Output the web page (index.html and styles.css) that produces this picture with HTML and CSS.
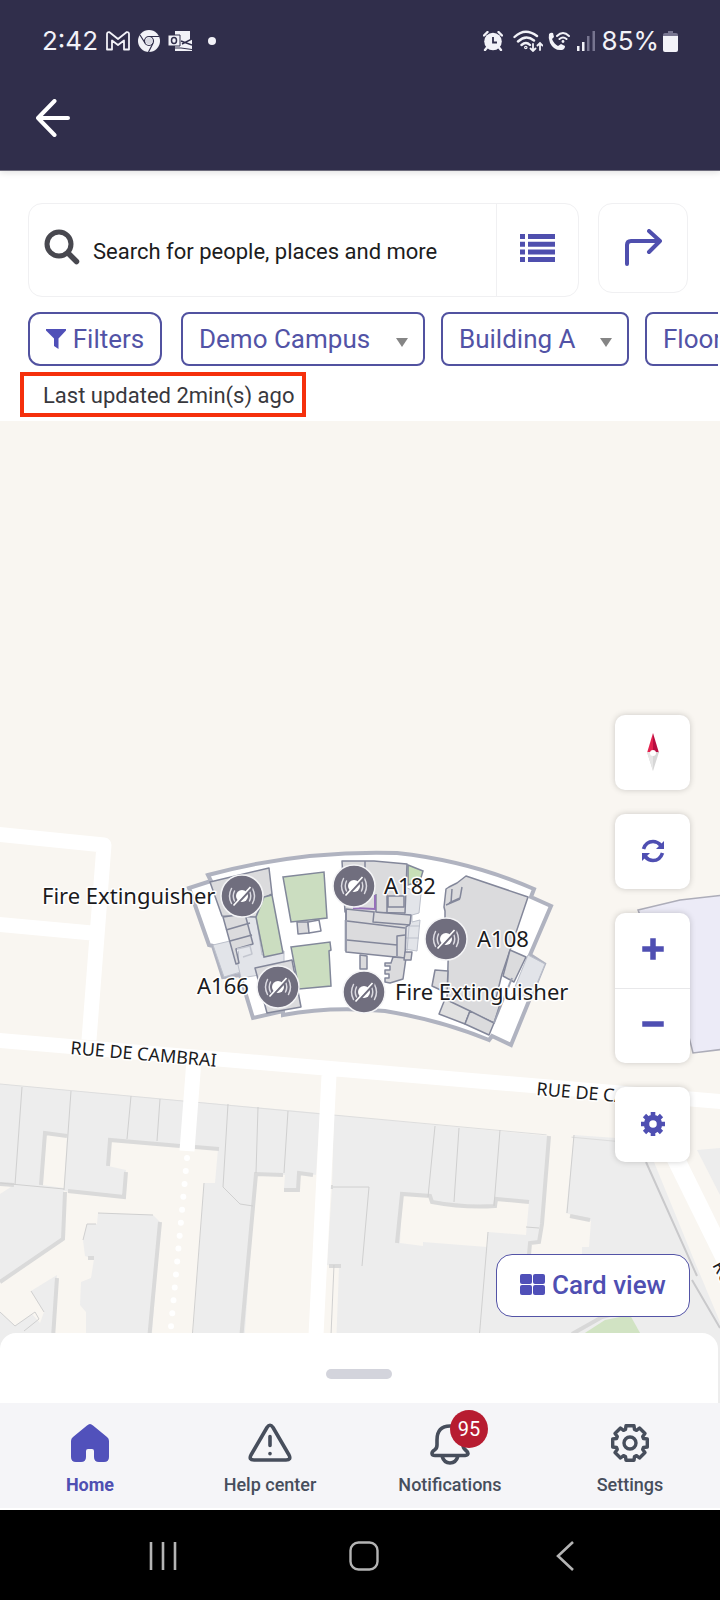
FILE: index.html
```html
<!DOCTYPE html>
<html lang="en">
<head>
<meta charset="utf-8">
<meta name="viewport" content="width=device-width, initial-scale=1">
<title>Campus map</title>
<link rel="stylesheet" href="styles.css">
</head>
<body>
<div class="app">
  <header class="topbar">
    <div class="status">
      <div class="status-left">
        <span class="clock">2:42</span>
        <svg class="ic-mail" width="24" height="20" viewBox="0 0 24 20" fill="none" stroke="#f2f2f8" stroke-width="1.8" stroke-linejoin="round"><path d="M1 18.500V3Q1 .8 3.500 1.200L12 8l8.500-6.800Q23 .8 23 3v15.500h-5V9.500L12 14 6 9.500v9z"/></svg>
        <svg class="ic-chrome" width="22" height="22" viewBox="0 0 22 22"><circle cx="11" cy="11" r="11" fill="#f2f2f8"/><g fill="none" stroke="#302e4b" stroke-width="1.200"><circle cx="11" cy="11" r="4.500"/><path d="M11 6.500h10M7 13 2 5M15 13.200 10.500 22"/></g><circle cx="11" cy="11" r="3.200" fill="#d8d8e2"/></svg>
        <svg class="ic-outlook" width="24" height="20" viewBox="0 0 24 20"><path d="M7 0h15v9l2-1v12H7z" fill="#f2f2f8"/><path d="M13 10l11 4M14 13l10-5" stroke="#302e4b" stroke-width="1.400" fill="none"/><path d="M7 17h6l11 1.500" stroke="#302e4b" stroke-width="1" fill="none"/><path d="M0 4h12v11H0z" fill="#f2f2f8" stroke="#302e4b"/><ellipse cx="6" cy="9.500" rx="2.500" ry="3" fill="none" stroke="#302e4b" stroke-width="1.500"/></svg>
        <span class="dot"></span>
      </div>
      <div class="status-right">
        <svg class="ic-alarm" width="20" height="20" viewBox="0 0 20 20"><circle cx="10" cy="10.500" r="8.800" fill="#f2f2f8"/><path d="M1 4.500 4.500 1M15.500 1 19 4.500M4 16.500l-2 2.500M16 16.500l2 2.500" stroke="#f2f2f8" stroke-width="2.400" stroke-linecap="round"/><path d="M10 6v5.500h4" stroke="#302e4b" stroke-width="1.800" fill="none"/></svg>
        <svg class="ic-wifi" width="30" height="22" viewBox="0 0 30 22" fill="none" stroke="#f2f2f8" stroke-width="2.400" stroke-linecap="round"><path d="M1.500 7Q12-3 24 6M5 11.500Q13 4 21 10.500M8.500 15q4.500-4 8.500 0"/><circle cx="12.800" cy="17.500" r=".6"/><path d="M20 14v7m-2.500-2.500L20 21l2.500-2.500M27 20v-7m-2.500 2.500L27 13l2.500 2.500" stroke-width="1.800"/></svg>
        <svg class="ic-call" width="22" height="20" viewBox="0 0 22 20"><path d="M1 3Q3 1 5 2l1 4-2 2q2 5 6 7l3-2 4 2q0 3-3 4Q6 20 2 12 0 7 1 3z" fill="#f2f2f8"/><path d="M9 5q6-6 12 0M11.500 8q3.500-3 7 0" fill="none" stroke="#f2f2f8" stroke-width="2" stroke-linecap="round"/><circle cx="15" cy="10.500" r="1.400" fill="#f2f2f8"/></svg>
        <svg class="ic-signal" width="18" height="20" viewBox="0 0 18 20"><path d="M0 15h2.500v5H0zM5 11h2.500v9H5z" fill="#f2f2f8"/><path d="M10 5h2.500v15H10zM15.500 0H18v20h-2.500z" fill="#777590"/></svg>
        <span class="clock">85%</span>
        <svg class="ic-battery" width="15" height="21" viewBox="0 0 15 21"><path d="M5 0h5v2h3q2 0 2 2v3H0V4q0-2 2-2h3z" fill="#777590"/><path d="M0 5h15v14q0 2-2 2H2q-2 0-2-2z" fill="#f2f2f8"/></svg>
      </div>
    </div>
    <button class="back" aria-label="Back"><svg width="34" height="38" viewBox="0 0 34 38" fill="none" stroke="#fff" stroke-width="4" stroke-linecap="round" stroke-linejoin="round"><path d="M18.500 2 2 19l16.500 17M2 19h30"/></svg></button>
  </header>

  <section class="tools">
    <div class="search-row">
      <div class="search-box">
        <label class="search-field">
          <svg width="36" height="36" viewBox="0 0 36 36" fill="none" stroke="#48484f"><circle cx="15" cy="15" r="12" stroke-width="5"/><path d="m24.500 24.500 8 8" stroke-width="5.500" stroke-linecap="round"/></svg>
          <input type="text" aria-label="Search" placeholder="Search for people, places and more">
        </label>
        <button class="list-btn" aria-label="List"><svg width="36" height="30" viewBox="0 0 36 30" fill="#4f4fae"><path d="M0 1h5v5H0zM8 1h27v5H8zM0 8.700h5v5H0zM8 8.700h27v5H8zM0 16.400h5v5H0zM8 16.400h27v5H8zM0 24h5v5H0zM8 24h27v5H8z"/></svg></button>
      </div>
      <button class="route-btn" aria-label="Directions"><svg width="38" height="38" viewBox="0 0 38 38" fill="none" stroke="#4f4fae" stroke-width="4" stroke-linecap="round" stroke-linejoin="round"><path d="M3 35V16q0-4 4-4h28M25 2l11 10-11 11"/></svg></button>
    </div>
    <div class="chips">
      <button class="chip filters"><svg width="20" height="20" viewBox="0 0 20 20" fill="#4f4fb8"><path d="M0 0h20v1.500l-7.500 8V20L8 17V9.500L0 1.500z"/></svg>Filters</button>
      <div class="pick campus"><select class="chip" aria-label="Campus"><option>Demo Campus</option></select></div>
      <div class="pick building"><select class="chip" aria-label="Building"><option>Building A</option></select></div>
      <div class="pick floor"><select class="chip" aria-label="Floor"><option>Floor 1</option></select></div>
    </div>
    <p class="updated">Last updated 2min(s) ago</p>
  </section>

  <main class="map">
    <svg class="map-art" viewBox="0 421 720 982" preserveAspectRatio="xMidYMax slice" role="img" aria-label="Floor map">
      <defs>
        <g id="pin">
          <circle r="21" fill="#706e7e" stroke="#f4f4f6" stroke-width="1.500"/>
          <circle r="6" fill="#fff"/>
          <path d="M-7.500-5Q-10 0-7.500 5M-10.500-7.500Q-14.500 0-10.500 7.500M7.500-5Q10 0 7.500 5M10.500-7.500Q14.500 0 10.500 7.500" fill="none" stroke="#dcdbe2" stroke-width="1.500" stroke-linecap="round"/>
          <path d="M-7 10 10-8" stroke="#706e7e" stroke-width="2.500"/>
          <path d="M-8.500 9.500 8.500-9" stroke="#fff" stroke-width="1.700"/>
        </g>
      </defs>
      <rect y="0" width="720" height="1403" fill="#f9f6f1"/>

      <!-- street blocks -->
      <g fill="#ededed">
        <path d="M0 1084 320 1113 316 1175 300 1173 298 1190 284 1188 285 1175 256 1173 240 1403H188L204 1183H215L218 1149 110 1140 108 1166 126 1170 124 1197 64 1191 63 1239 0 1282z"/>
        <path d="M98 1213 153 1215 160 1222 147 1403H86V1312L80 1305 81 1282 91 1278 94 1259 85 1256 83 1240 87 1224H97z"/>
        <path d="M57 1275 31 1291 44 1312 40 1323 32 1314 15 1326 0 1312V1403H52z"/>
        <path d="M334 1115 549 1136 540 1240 530 1243 529 1257H582V1247H589L591 1221 566 1213 574 1135 645 1140 694 1260 720 1322V1403H334L339 1267 327 1265 332 1187z"/>
        <path d="M697 1150 720 1148V1195z"/>
      </g>
      <g fill="#f9f6f1">
        <path d="m45 1133 22 3-3 52-22-3zM0 1185l14 0-14 9z"/>
        <path d="m402 1195 27 1 3 6 64 5 2-8 31 3-3 33-38-3-1 15-64-5v4l-23-3z"/>
        <path d="m530 1243 52 4-1 14-52-4z"/>
      </g>
      <path d="m574 1340 31-20 25-5 14 25z" fill="#d1e3c3"/>
      <g fill="none" stroke="#dadada" stroke-width="4">
        <path d="m41 1185 4-52 22 3M108 1166l2-26 70 6M195 1147l24 2M68 1191l56 6 2-25M65 1192l-2 47-63 43M0 1184l14 1M241 1340l15-166 27 1M284 1190h14l1-17 14 2M160 1222l-11 118M57 1278l-4 60"/>
        <path d="m397 1243 5-49 28 2 2 6q32 6 63 4l1-7 33 3M549 1136l-7 88-3 18-9 1-1 12M570 1216l20 4M88 1258h6M328 1187h5M329 1266h12"/>
      </g>
      <path d="m572 1334 30-17 12-3" fill="none" stroke="#d8d8d8" stroke-width="4"/>
      <g fill="none" stroke="#d0d0d0" stroke-width="1">
        <path d="m0 1084 720 67" stroke="#dedede" stroke-dasharray="549 25 65 200"/>
        <path d="m22 1087-7 98M71 1091l-7 99M131 1096l-4 43M160 1099l-3 42M228 1104l-5 83 17 17 13 2M258 1107l-2 66M288 1111l-4 62M0 1183l64 6M204 1183l-12 157M98 1213l55 2M83 1240l4-16h9M333 1187h36l-7 79M435 1126l-7 71M459 1128l-5 74M500 1130l-6 76M488 1232l-9 108M574 1135l-7 78M334 1265l-3 70M526 1227l13 1M31 1291l13 21M0 1312l15 14 20-14 4 7-15 12"/>
        <path d="M646 1162 697 1276M692 1280l28 48" stroke="#c9c9cb" stroke-width="2"/>
      </g>

      <!-- roads -->
      <g fill="none" stroke="#fff" stroke-width="15" stroke-linejoin="round">
        <path d="M-5 834 104 845 89 1040M-5 924 92 933M-5 1040 360 1071 725 1102M194 1060l-7 91M329 1075l-15 300"/>
        <path d="m664 1135 70 142" stroke-width="18"/>
        <path d="m187 1158-18 190" stroke-width="6" stroke-linecap="round" stroke-dasharray="0 13"/>
      </g>

      <!-- neighbouring building -->
      <path d="m638 910 42-10 45-5v154l-32 4-5-20z" fill="#ecebf7" stroke="#adadb9" stroke-width="1.500"/>

      <!-- Building A -->
      <path d="M208 875Q300 850 397 853 470 861 534 889L531 897 551 906 530 955 544 964 511 1045 492 1036 489 1040Q440 1020 385 1011 330 1006 283 1015L283 1011 253 1018 240 975 223 977 213 946 209 945 189 888 211 881z" fill="#fff" stroke="#b0b3c0" stroke-width="4"/>
      <g fill="#e2e4e9" stroke="#bcc0cb" stroke-width="1">
        <path d="m213 945 17-4 14 30-20 6z"/>
        <path d="m238 965 2-50 15-5 7 45 22-4v20l-43 7z"/>
        <path d="m528 955 17 9-14 34-19-4z"/>
        <path d="M405 887 421 894 419 913 412 915V922L420 920 417 951 404 949z"/>
        <path d="M406 926h14M406 938h13M410 915l-3 36" fill="none"/>
        <path d="M345 920h5v31h-5z"/>
      </g>
      <g fill="#dbdbdd" stroke="#83879a" stroke-width="1.500" stroke-linejoin="round">
        <path d="m210 882 59-14 3 26-8 4-8 19-34-1z"/>
        <path d="m223 917 22-3 8 30-17 5 3 14-3 1z"/>
        <path d="m226 930 24-7M230 941l22-6" fill="none"/>
        <path d="m237 949 13-3 2 8-9 3" fill="#e4e6eb" stroke="#c3c6cf"/>
        <path d="m255 968 37-8 9 47-34 6z"/>
        <path d="M297 922h11l1 11-11 1z"/>
        <path d="m308 922 11-2 2 11-12 2z" fill="#fff"/>
        <path d="M342 861h32l33 3-2 49-60-1z"/>
        <path d="M365 861v35M376 894v18M387 893v22M388 896h16v11h-16z"/>
        <path d="m346 909 28 3 37 3-1 9-4 3-1 31-59-6v-31z"/>
        <path d="M347 921 405 928M347 940l50 5M374 912l-1 10 37 3M397 956v-20l8-1M346 910v10"/>
        <path d="m360 955 7 1v13h-7zM393 957l13 1-3 21-13 4-5-1v-4h4v-4h-4v-4h5v-4h-5v-3h6z"/>
        <path d="M405 952h7l-1 8h-7z"/>
        <path d="m466 876 62 21-26 77-6 24 5 3-7 22-47-22 2-72h3v-9l-7-1v-8l-1-4 2-18 3-2 8-4z"/>
        <path d="m452 889-1 14M462 887l-2 11-11 5M446 905l14-6"/>
        <path d="m510 950 16 7-12 25-11-6z"/>
        <path d="m435 970 13 1-1 22-15-7z"/>
        <path d="m445 999 25 12-5 13-26-10z" fill="#e1e1e1"/>
        <path d="m470 1011 24 12-5 12-24-11z"/>
      </g>
      <path d="m494 1023 18-45" fill="none" stroke="#9da1b1" stroke-width="2"/>
      <g fill="#cbddc0" stroke="#82889a" stroke-width="1.500">
        <path d="m283 877 41-5 3 46-36 4z"/>
        <path d="m291 947 39-5 1 8-2 1 2 35-32 3z"/>
        <path d="m264 897 8-2 11 58-19 4-8-40z"/>
        <path d="m408 865 15 6-3 10-12 4z" fill="#c8e0b7"/>
      </g>
      <path d="m353 908 22 1v-14" fill="none" stroke="#9671ba" stroke-width="2"/>

      <use href="#pin" x="242" y="896"/>
      <use href="#pin" x="354" y="886"/>
      <use href="#pin" x="446" y="939"/>
      <use href="#pin" x="278" y="987"/>
      <use href="#pin" x="364" y="992"/>
      <g class="place">
        <text x="42" y="904">Fire Extinguisher</text>
        <text x="384" y="894">A182</text>
        <text x="477" y="947">A108</text>
        <text x="197" y="994">A166</text>
        <text x="395" y="1000">Fire Extinguisher</text>
      </g>
      <g class="street">
        <text transform="translate(70 1054) rotate(5)">RUE DE CAMBRAI</text>
        <text transform="translate(536 1095) rotate(5)">RUE DE CAMBRAI</text>
        <text transform="translate(712 1265) rotate(62)">RUE</text>
      </g>
    </svg>

    <div class="overlay">
      <div class="controls">
        <button class="ctl" aria-label="Compass"><svg width="14" height="38" viewBox="0 0 14 38"><path d="M7 0v20H1z" fill="#e3224e"/><path d="M7 0v20h6z" fill="#b80d40"/><path d="M1 19h12L7 38z" fill="#d7d7d7"/><path d="M1 19h6v19z" fill="#e6e6e6"/><circle cx="7" cy="20" r="3" fill="#fff"/></svg></button>
        <button class="ctl" aria-label="Refresh"><svg width="24" height="24" viewBox="0 0 24 24"><path d="M2.500 10Q5 2.500 12 2.500q4.500 0 8 4M21.500 14q-2.500 7.500-9.500 7.500-4.500 0-8-4" fill="none" stroke="#4f4fb2" stroke-width="3.600"/><path d="M23 2v8h-8zM1 22v-8h8z" fill="#4f4fb2"/></svg></button>
        <div class="zoom">
          <button aria-label="Zoom in"><svg width="22" height="22" viewBox="0 0 22 22"><path d="M11 3v16M3 11h16" stroke="#4f4fb2" stroke-width="5.500" stroke-linecap="square"/></svg></button>
          <button aria-label="Zoom out"><svg width="22" height="22" viewBox="0 0 22 22"><path d="M3 11h16" stroke="#4f4fb2" stroke-width="5.500" stroke-linecap="square"/></svg></button>
        </div>
        <button class="ctl" aria-label="Map settings"><svg width="24" height="24" viewBox="0 0 24 24"><circle cx="12" cy="12" r="6.500" fill="none" stroke="#4f4fb2" stroke-width="5.500"/><path d="M12 0v4M12 20v4M0 12h4M20 12h4M3.500 3.500l3 3M17.500 17.500l3 3M3.500 20.500l3-3M17.500 6.500l3-3" stroke="#4f4fb2" stroke-width="4.600"/></svg></button>
      </div>
      <button class="card-view"><svg width="25" height="22" viewBox="0 0 25 22" fill="#4f4fb8"><rect width="12" height="10" rx="2"/><rect x="13" width="12" height="10" rx="2"/><rect y="11" width="12" height="10" rx="2"/><rect x="13" y="11" width="12" height="10" rx="2"/></svg>Card view</button>
      <div class="sheet"><span class="grip"></span></div>
    </div>
  </main>

  <nav class="tabs">
    <a class="tab active" href="#home"><span class="tab-icon"><svg width="40" height="40" viewBox="0 0 40 40" fill="#5151bb"><path d="M17 2.500q3-3 6 0l14 11.500q2 1.500 2 4v16q0 5-5 5h-5q-5 0-5-5v-6q0-2-2-2h-4q-2 0-2 2v6q0 5-5 5H6q-5 0-5-5V18q0-2.500 2-4z"/></svg></span>Home</a>
    <a class="tab" href="#help"><span class="tab-icon"><svg width="44" height="40" viewBox="0 0 44 40" fill="none" stroke="#474e5c" stroke-width="3.600" stroke-linecap="round" stroke-linejoin="round"><path d="M19 4.500q3-4.500 6 0L41 32q2.500 5-3 5H6q-5.500 0-3-5zM22 13.500v9"/><path d="M22 30.500v.2"/></svg></span>Help center</a>
    <a class="tab" href="#notifications"><span class="tab-icon"><svg width="40" height="42" viewBox="0 0 40 42" fill="none" stroke="#474e5c" stroke-width="3.600" stroke-linejoin="round"><path d="M7 17q0-14 13-14t13 14v5q0 3 2.500 5t2.500 3.500-3 2H5q-3 0-3-2T4.500 27 7 22zM12 33q2 7 8 7t8-7"/></svg><span class="badge">95</span></span>Notifications</a>
    <a class="tab" href="#settings"><span class="tab-icon"><svg width="40" height="40" viewBox="-20 -20 40 40" fill="none" stroke="#474e5c" stroke-width="3.400" stroke-linejoin="round"><circle r="6"/><path d="M-4-17.300H4L4.500-13.500 6.500-12.700 9.500-15 15-9.500 12.700-6.500 13.500-4.500 17.300-4V4L13.500 4.500 12.700 6.500 15 9.500 9.500 15 6.500 12.700 4.500 13.500 4 17.300H-4L-4.500 13.500-6.500 12.700-9.500 15-15 9.500-12.700 6.500-13.500 4.500-17.300 4V-4L-13.500-4.500-12.700-6.500-15-9.500-9.500-15-6.500-12.700-4.500-13.500z"/></svg></span>Settings</a>
  </nav>

  <footer class="sysnav">
    <button aria-label="Recents"><svg width="28" height="30" viewBox="0 0 28 30" stroke="#b4b4b4" stroke-width="2.600"><path d="M2 1v28M14 1v28M26 1v28"/></svg></button>
    <button aria-label="Home screen"><svg width="30" height="30" viewBox="0 0 30 30" fill="none" stroke="#b4b4b4" stroke-width="2.400"><rect x="1.500" y="1.500" width="27" height="27" rx="8"/></svg></button>
    <button aria-label="System back"><svg width="18" height="32" viewBox="0 0 18 32" fill="none" stroke="#b4b4b4" stroke-width="2.600"><path d="M17 2 2 16l15 14"/></svg></button>
  </footer>
</div>
</body>
</html>
```

FILE: styles.css
```css
* { box-sizing: border-box; }

body {
  margin: 0;
  font-family: Roboto, "Liberation Sans", sans-serif;
  background: #fff;
}

button {
  margin: 0;
  padding: 0;
  border: 0;
  background: none;
  font: inherit;
  display: flex;
  align-items: center;
  justify-content: center;
}

svg { display: block; flex: none; }

.app {
  min-height: 100vh;
  display: flex;
  flex-direction: column;
}

.topbar {
  background: #302e4b;
  color: #f2f2f8;
  height: 171px;
  border-bottom: 1px solid #6d6c7c;
  box-shadow: 0 2px 6px #0000001c;
  position: relative;
  z-index: 1;
}

.status {
  display: flex;
  justify-content: space-between;
  padding: 25px 42px 0;
  height: 57px;
}

.status-left, .status-right { display: flex; align-items: center; }
.status-left { gap: 8px; }
.status-right { gap: 7px; }
.clock { font-family: Inter, Roboto, sans-serif; font-size: 26px; line-height: 32px; }
.dot { width: 8px; height: 8px; border-radius: 50%; background: #f2f2f8; margin-left: 8px; }
.ic-wifi { margin-left: 3px; }
.ic-call { margin-left: -2px; }
.ic-battery { margin-left: -3px; }

.back { margin: 42px 0 0 36px; }

.tools { padding: 32px 0 4px; }

.search-row {
  display: flex;
  align-items: flex-start;
  gap: 19px;
  padding: 0 32px 0 28px;
}

.search-box {
  flex: 1;
  min-width: 0;
  height: 94px;
  display: flex;
  border: 1px solid #f0f0f2;
  border-radius: 14px;
}

.search-field {
  flex: 1;
  min-width: 0;
  display: flex;
  align-items: center;
  gap: 13px;
  padding-left: 15px;
}

.search-field svg { margin-bottom: 6px; }

.search-field input {
  flex: 1;
  min-width: 0;
  border: 0;
  outline: 0;
  padding: 4px 0 0;
  background: none;
  font: 22px/32px Roboto, sans-serif;
}

.search-field input::placeholder { color: #1c1c20; opacity: 1; }

.list-btn { width: 82px; border-left: 1px solid #f0f0f2; }
.list-btn svg { margin-bottom: 4px; }
.route-btn { width: 90px; height: 90px; border: 1px solid #f0f0f2; border-radius: 14px; }

.chips {
  display: flex;
  gap: 16px;
  margin: 15px 2px 0 0;
  padding-left: 28px;
  overflow: hidden;
}

.chip {
  height: 54px;
  border: 2px solid #5152a0;
  border-radius: 8px;
  color: #5253a6;
  background: #fff;
  font: 26px/32px Roboto, sans-serif;
}

.filters { flex: none; width: 134px; gap: 7px; border-radius: 12px; margin-right: 3px; }

.pick { flex: none; position: relative; }
.pick select { appearance: none; width: 100%; padding: 0 16px; margin: 0; display: block; }
.pick::after {
  content: "";
  position: absolute;
  right: 17px;
  top: 26px;
  border: 6px solid transparent;
  border-top: 9px solid #858585;
  border-bottom: 0;
}
.campus { width: 244px; }
.building { width: 188px; }
.floor { width: 150px; }

.updated {
  width: fit-content;
  margin: 6px 0 0 20px;
  padding: 5px 8px 2px 19px;
  border: 4px solid #f5300c;
  color: #38383d;
  font-size: 22px;
  line-height: 30px;
}

.map {
  flex: 1;
  min-height: 700px;
  position: relative;
  overflow: hidden;
  background: #f9f6f1;
}

.map-art { position: absolute; inset: 0; width: 100%; height: 100%; }

.place, .street {
  font-family: "Noto Sans", "Open Sans", sans-serif;
  fill: #1b1b1d;
  stroke: #fff;
  stroke-width: 3px;
  stroke-linejoin: round;
  paint-order: stroke;
}
.place { font-size: 22px; }
.street { font-size: 18px; }

.overlay {
  position: absolute;
  inset: 0;
  display: flex;
  flex-direction: column;
  justify-content: flex-end;
  align-items: flex-end;
}

.controls { display: flex; flex-direction: column; gap: 24px; margin: 0 30px 92px 0; }

.ctl, .zoom {
  width: 75px;
  background: #fff;
  border-radius: 10px;
  box-shadow: 0 0 6px #00000030;
}
.ctl { height: 75px; padding-bottom: 2px; }
.zoom button { width: 100%; height: 75px; padding-bottom: 4px; }
.zoom button + button { border-top: 1px solid #e8e8ea; }

.card-view {
  width: 194px;
  height: 63px;
  gap: 7px;
  padding-bottom: 2px;
  margin: 0 30px 16px 0;
  border: 1px solid #5353a6;
  border-radius: 16px;
  background: #fff;
  color: #4f4fb2;
  font-size: 26px;
  font-weight: 500;
}

.sheet {
  align-self: stretch;
  height: 70px;
  margin-right: 2px;
  padding-top: 12px;
  background: #fff;
  border-radius: 16px 16px 0 0;
  display: flex;
  align-items: center;
  justify-content: center;
}
.grip { width: 66px; height: 10px; border-radius: 5px; background: #d3d4dc; }

.tabs {
  display: grid;
  grid-template-columns: repeat(4, 1fr);
  height: 107px;
  padding-top: 20px;
  background: #f5f5f8;
  border-bottom: 2px solid #fff;
}

.tab {
  display: flex;
  flex-direction: column;
  align-items: center;
  gap: 10px;
  color: #474e5c;
  font-size: 18px;
  font-weight: 500;
  line-height: 24px;
  text-decoration: none;
}
.tab.active { color: #4f4fb2; font-weight: 700; }
.tab-icon { position: relative; height: 40px; }

.badge {
  position: absolute;
  left: 20px;
  top: -13px;
  width: 38px;
  height: 38px;
  border-radius: 50%;
  background: #b71c31;
  color: #fff;
  font-size: 20px;
  font-weight: 400;
  line-height: 38px;
  text-align: center;
}

.sysnav {
  height: 90px;
  background: #000;
  display: grid;
  grid-template-columns: repeat(3, 1fr);
  padding: 2px 54px 0 62px;
}
```
